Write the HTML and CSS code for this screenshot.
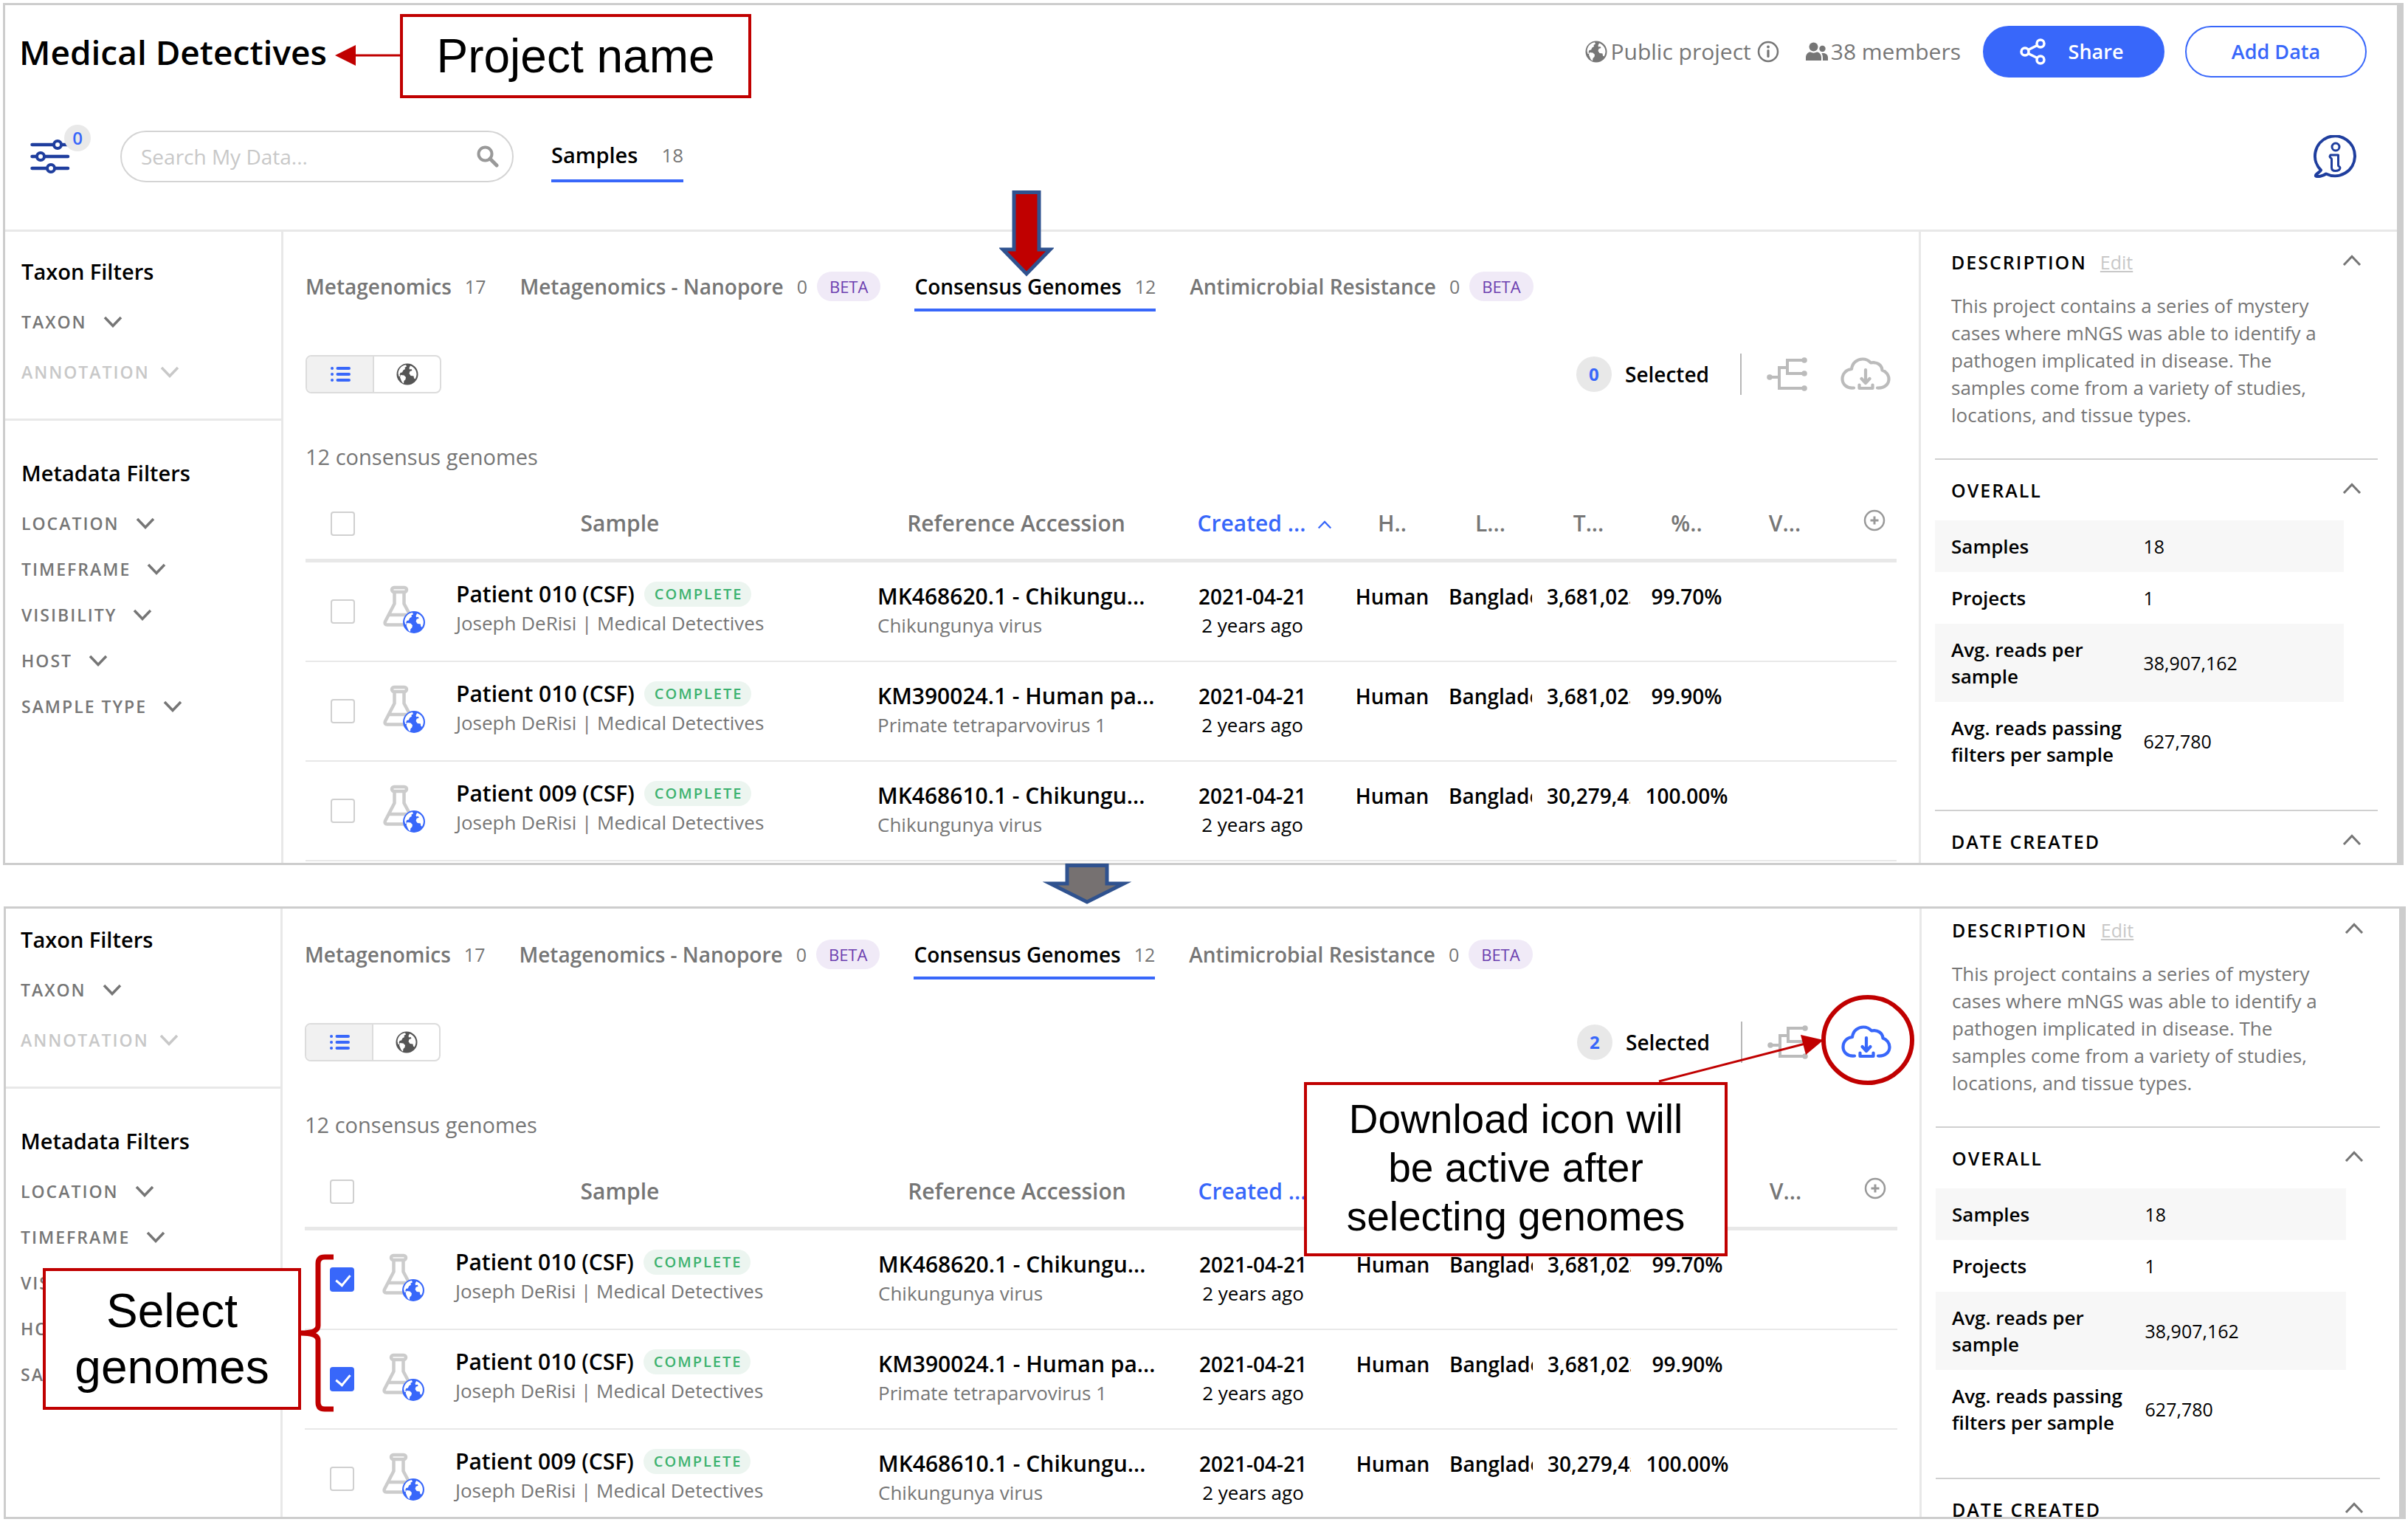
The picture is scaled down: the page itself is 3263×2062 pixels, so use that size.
FILE: index.html
```html
<!DOCTYPE html>
<html lang="en">
<head>
<meta charset="utf-8">
<meta name="viewport" content="width=device-width, initial-scale=1">
<title>Medical Detectives</title>
<link rel="stylesheet" href="styles.css">
</head>
<body>
<svg class="sprite" aria-hidden="true">
  <symbol id="globe" viewBox="0 0 30 30">
    <circle cx="15" cy="15" r="14.5" fill="currentColor"/>
    <path fill="#fff" d="M2.5 14C3 7.500 7.500 3 13 2.300L14 4.500 11.500 6 12 8 9.500 9.500 8 12.500 5.500 13 4.500 16 6 17.500 3.500 18Z"/>
    <path fill="#fff" d="M6 16 10.500 16.500 13 19 12.500 22 10.500 24 10 27.500C7 26 6.500 22 5 19.500Z"/>
    <path fill="#fff" d="M19 3.500C24.500 5.500 27.500 10 27.500 15 27.300 18 26.500 20 25.500 21.500L24 20.500 23.500 17.500 19.500 17 17.500 14 18.500 11 21.500 10 20.500 8 18 8.500 17.500 6.500Z"/>
  </symbol>
  <symbol id="info" viewBox="0 0 30 30">
    <circle cx="15" cy="15" r="13" fill="none" stroke="currentColor" stroke-width="2.500"/>
    <circle cx="15" cy="8.500" r="1.900" fill="currentColor"/>
    <path d="M15 13.500v8" stroke="currentColor" stroke-width="3.200" stroke-linecap="round"/>
  </symbol>
  <symbol id="people" viewBox="0 0 30 26">
    <circle cx="10.500" cy="6.500" r="6" fill="currentColor"/>
    <path fill="currentColor" d="M0 25v-4c0-5 3.500-7.500 6-7.500 3 1.500 6 1.500 9 0 2.500 0 6 2.500 6 7.500v4Z"/>
    <circle cx="22.500" cy="9" r="4.200" fill="currentColor"/>
    <path fill="currentColor" d="M23 25v-4c0-2-.5-4-1.500-6h2c4 0 6.500 2.500 6.500 6v4Z"/>
  </symbol>
  <symbol id="share" viewBox="0 0 36 36">
    <g fill="none" stroke="currentColor" stroke-width="3.500"><circle cx="7" cy="18" r="5"/><circle cx="28" cy="7" r="5"/><circle cx="28" cy="29" r="5"/><path d="M11.500 15.500 23.500 9.500M11.500 20.500 23.500 26.500"/></g>
  </symbol>
  <symbol id="sliders" viewBox="0 0 54 48">
    <g stroke="currentColor" stroke-width="4.500" stroke-linecap="round" fill="#fff"><path d="M2.500 8H51M2.500 24H51M2.500 40H51"/><g stroke-width="4"><circle cx="37" cy="8" r="5"/><circle cx="14" cy="24" r="5"/><circle cx="28" cy="40" r="5"/></g></g>
  </symbol>
  <symbol id="magnifier" viewBox="0 0 30 30">
    <circle cx="11.500" cy="11.500" r="9" fill="none" stroke="currentColor" stroke-width="4"/><path d="M18 18 27 27" stroke="currentColor" stroke-width="5" stroke-linecap="round"/>
  </symbol>
  <symbol id="help" viewBox="0 0 58 58">
    <g fill="none" stroke="currentColor" stroke-width="4" stroke-linejoin="round"><path d="M10 47.500A27 27 0 1 1 17 52.500C12 56 6 56.500 3 55.500 1.500 53 9 50.500 10 47.500Z"/><g stroke-width="3"><circle cx="30" cy="16" r="5"/><path d="M23 27H33.500V41C33.500 43 36 42 36 44.500 35.500 48 32 48.500 29.500 48.500 26 48.500 24.500 47 24.500 44V32.500C24.500 31 22 31 22 29Z"/></g></g>
  </symbol>
  <symbol id="down" viewBox="0 0 26 16"><path d="M2 2 13 13.500 24 2" fill="none" stroke="currentColor" stroke-width="3.500"/></symbol>
  <symbol id="up" viewBox="0 0 26 16"><path d="M2 14 13 2.500 24 14" fill="none" stroke="currentColor" stroke-width="3"/></symbol>
  <symbol id="list" viewBox="0 0 28 24">
    <g stroke="currentColor" stroke-width="4" stroke-linecap="round"><path d="M10.500 4H26M10.500 12H26M10.500 20H26M3 4h.1M3 12h.1M3 20h.1"/></g>
  </symbol>
  <symbol id="tree" viewBox="0 0 56 46">
    <g fill="none" stroke="currentColor" stroke-width="4"><path d="M4 27H17M52 42H17V14H28M52 4H28V22H52"/></g>
    <g fill="currentColor"><circle cx="4" cy="27" r="3.800"/><circle cx="51" cy="4" r="3.800"/><circle cx="51" cy="22" r="3.800"/><circle cx="51" cy="42" r="3.800"/></g>
  </symbol>
  <symbol id="cloud" viewBox="0 0 68 46">
    <g fill="none" stroke="currentColor" stroke-width="4.200" stroke-linecap="round" stroke-linejoin="round"><path d="M18 41.500C8 42.500 2.500 36 2.500 29.500 2.500 22 8 16.500 15 16 16 7 23 2.500 30 2.500 35 2.500 38.500 4.500 41 7.500 49 6 56 10 56.500 17.500 61.500 19 65.500 24 65.500 29.500 65.500 36 60.500 42 50 41.500"/><path d="M34 17V34M28.500 29 34 35 39.500 29M25.500 37.500V42H43.500V37.500"/></g>
  </symbol>
  <symbol id="flask" viewBox="0 0 58 66">
    <g fill="none" stroke="#ccc" stroke-width="4.500" stroke-linejoin="round"><rect x="12" y="3" width="20" height="6" rx="3"/><path d="M15.500 9V25L3 49C2 52 3 53.500 5.500 53.500H39C42 53.500 42.500 51 41 48.500L28.500 25V9M9 40H36"/></g>
    <use href="#globe" x="26.500" y="34.500" width="31" height="31" color="#3867fa"/>
  </symbol>
  <symbol id="plus" viewBox="0 0 30 30"><g fill="none" stroke="currentColor"><circle cx="15" cy="15" r="13" stroke-width="2.500"/><path d="M15 9.500v11M9.500 15h11" stroke-width="3"/></g></symbol>
</svg>

<section class="stage">
  <div class="panel">
    <header class="header">
      <div class="header-row">
        <h1 class="title">Medical Detectives</h1>
        <div class="meta"><svg class="icon-30"><use href="#globe"/></svg><span>Public project</span><svg class="icon-30 meta-info"><use href="#info"/></svg></div>
        <div class="meta meta-members"><svg class="icon-people"><use href="#people"/></svg><span>38 members</span></div>
        <button class="button button-primary"><svg class="icon-share"><use href="#share"/></svg>Share</button>
        <button class="button">Add Data</button>
      </div>
      <div class="header-row header-tools">
        <button class="filters-toggle" aria-label="Filters"><svg class="icon-sliders"><use href="#sliders"/></svg><span class="filters-count">0</span></button>
        <label class="search"><input class="search-input" type="search" aria-label="Search" placeholder="Search My Data..."><svg class="icon-30"><use href="#magnifier"/></svg></label>
        <button class="tab tab-active tab-samples">Samples <span class="count">18</span></button>
        <button class="help" aria-label="Help"><svg class="icon-help"><use href="#help"/></svg></button>
      </div>
    </header>
    <div class="workspace">
      <nav class="filters" aria-label="Filters">
        <div class="filter-group">
          <h2 class="filter-heading">Taxon Filters</h2>
          <button class="filter filter-tall">TAXON<svg class="icon-chevron"><use href="#down"/></svg></button>
          <button class="filter filter-tall filter-off" disabled>ANNOTATION<svg class="icon-chevron"><use href="#down"/></svg></button>
        </div>
        <div class="filter-group filter-group-meta">
          <h2 class="filter-heading">Metadata Filters</h2>
          <button class="filter">LOCATION<svg class="icon-chevron"><use href="#down"/></svg></button>
          <button class="filter">TIMEFRAME<svg class="icon-chevron"><use href="#down"/></svg></button>
          <button class="filter">VISIBILITY<svg class="icon-chevron"><use href="#down"/></svg></button>
          <button class="filter">HOST<svg class="icon-chevron"><use href="#down"/></svg></button>
          <button class="filter">SAMPLE TYPE<svg class="icon-chevron"><use href="#down"/></svg></button>
        </div>
      </nav>
      <main class="main">
        <div class="tabs">
          <button class="tab">Metagenomics <span class="count">17</span></button>
          <button class="tab">Metagenomics - Nanopore <span class="count">0</span><span class="beta">BETA</span></button>
          <button class="tab tab-active">Consensus Genomes <span class="count">12</span>
            <svg class="pointer-red" viewBox="0 0 74 118"><path d="M20 2.500H54V80H69L37 113 5 80H20Z" fill="#c00000" stroke="#2f528f" stroke-width="5"/></svg>
          </button>
          <button class="tab">Antimicrobial Resistance <span class="count">0</span><span class="beta">BETA</span></button>
        </div>
        <div class="toolbar">
          <div class="view-toggle"><button class="view view-on" aria-label="List view"><svg class="icon-list"><use href="#list"/></svg></button><button class="view" aria-label="Map view"><svg class="icon-30"><use href="#globe"/></svg></button></div>
          <div class="selection"><span class="selected-count">0</span><span>Selected</span></div>
          <div class="actions"><button aria-label="Phylogenetic tree"><svg class="icon-tree"><use href="#tree"/></svg></button><button aria-label="Download"><svg class="icon-cloud"><use href="#cloud"/></svg></button></div>
        </div>
        <p class="summary">12 consensus genomes</p>
        <table class="samples">
          <colgroup><col class="col-check"><col><col class="col-ref"><col class="col-created"><col class="col-narrow"><col class="col-narrow"><col class="col-narrow"><col class="col-narrow"><col class="col-narrow"><col class="col-add"></colgroup>
          <thead><tr><th class="check"><input type="checkbox" aria-label="Select all"></th><th>Sample</th><th>Reference Accession</th><th class="sorted">Created ...<svg class="icon-sort"><use href="#up"/></svg></th><th>H..</th><th>L...</th><th>T...</th><th>%..</th><th>V...</th><th class="add"><button aria-label="Add column"><svg class="icon-30"><use href="#plus"/></svg></button></th></tr></thead>
          <tbody>
            <tr><td class="check"><input type="checkbox" aria-label="Select Patient 010 (CSF)"></td><td class="sample"><div class="sample-box"><svg class="icon-flask"><use href="#flask"/></svg><div><div class="name">Patient 010 (CSF)<span class="status">COMPLETE</span></div><div class="sub">Joseph DeRisi | Medical Detectives</div></div></div></td><td class="ref"><div class="name">MK468620.1 - Chikungu...</div><div class="sub">Chikungunya virus</div></td><td>2021-04-21<div class="ago">2 years ago</div></td><td>Human</td><td><div class="clip">Bangladesh</div></td><td><div class="clip">3,681,023</div></td><td class="pct">99.70%</td><td></td><td></td></tr>
            <tr><td class="check"><input type="checkbox" aria-label="Select Patient 010 (CSF)"></td><td class="sample"><div class="sample-box"><svg class="icon-flask"><use href="#flask"/></svg><div><div class="name">Patient 010 (CSF)<span class="status">COMPLETE</span></div><div class="sub">Joseph DeRisi | Medical Detectives</div></div></div></td><td class="ref"><div class="name">KM390024.1 - Human pa...</div><div class="sub">Primate tetraparvovirus 1</div></td><td>2021-04-21<div class="ago">2 years ago</div></td><td>Human</td><td><div class="clip">Bangladesh</div></td><td><div class="clip">3,681,023</div></td><td class="pct">99.90%</td><td></td><td></td></tr>
            <tr><td class="check"><input type="checkbox" aria-label="Select Patient 009 (CSF)"></td><td class="sample"><div class="sample-box"><svg class="icon-flask"><use href="#flask"/></svg><div><div class="name">Patient 009 (CSF)<span class="status">COMPLETE</span></div><div class="sub">Joseph DeRisi | Medical Detectives</div></div></div></td><td class="ref"><div class="name">MK468610.1 - Chikungu...</div><div class="sub">Chikungunya virus</div></td><td>2021-04-21<div class="ago">2 years ago</div></td><td>Human</td><td><div class="clip">Bangladesh</div></td><td><div class="clip">30,279,424</div></td><td class="pct">100.00%</td><td></td><td></td></tr>
          </tbody>
        </table>
      </main>
      <aside class="details">
        <section class="detail">
          <div class="detail-head"><h3>DESCRIPTION</h3><a class="edit" href="#edit">Edit</a><svg class="icon-chevron"><use href="#up"/></svg></div>
          <p class="description">This project contains a series of mystery cases where mNGS was able to identify a pathogen implicated in disease. The samples come from a variety of studies, locations, and tissue types.</p>
        </section>
        <section class="detail">
          <div class="detail-head"><h3>OVERALL</h3><svg class="icon-chevron"><use href="#up"/></svg></div>
          <table class="stats">
            <tr><th scope="row">Samples</th><td>18</td></tr>
            <tr><th scope="row">Projects</th><td>1</td></tr>
            <tr><th scope="row">Avg. reads per sample</th><td>38,907,162</td></tr>
            <tr><th scope="row">Avg. reads passing filters per sample</th><td>627,780</td></tr>
          </table>
        </section>
        <section class="detail">
          <div class="detail-head"><h3>DATE CREATED</h3><svg class="icon-chevron"><use href="#up"/></svg></div>
        </section>
      </aside>
    </div>
  </div>
  <div class="callout callout-project">Project name</div>
  <svg class="arrow-project" viewBox="0 0 90 28"><path d="M26 14H90" stroke="#c00000" stroke-width="3"/><path d="M0 14 28 0V28Z" fill="#c00000"/></svg>
</section>

<div class="step"><svg class="step-arrow" viewBox="0 0 120 56"><path d="M33 2.500H87V27H110L60 52 10 27H33Z" fill="#767171" stroke="#2f528f" stroke-width="5" stroke-miterlimit="10"/></svg></div>

<section class="stage stage-second">
  <div class="panel panel-cropped">
    <div class="workspace">
      <nav class="filters" aria-label="Filters">
        <div class="filter-group">
          <h2 class="filter-heading">Taxon Filters</h2>
          <button class="filter filter-tall">TAXON<svg class="icon-chevron"><use href="#down"/></svg></button>
          <button class="filter filter-tall filter-off" disabled>ANNOTATION<svg class="icon-chevron"><use href="#down"/></svg></button>
        </div>
        <div class="filter-group filter-group-meta">
          <h2 class="filter-heading">Metadata Filters</h2>
          <button class="filter">LOCATION<svg class="icon-chevron"><use href="#down"/></svg></button>
          <button class="filter">TIMEFRAME<svg class="icon-chevron"><use href="#down"/></svg></button>
          <button class="filter">VISIBILITY<svg class="icon-chevron"><use href="#down"/></svg></button>
          <button class="filter">HOST<svg class="icon-chevron"><use href="#down"/></svg></button>
          <button class="filter">SAMPLE TYPE<svg class="icon-chevron"><use href="#down"/></svg></button>
        </div>
      </nav>
      <main class="main">
        <div class="tabs">
          <button class="tab">Metagenomics <span class="count">17</span></button>
          <button class="tab">Metagenomics - Nanopore <span class="count">0</span><span class="beta">BETA</span></button>
          <button class="tab tab-active">Consensus Genomes <span class="count">12</span></button>
          <button class="tab">Antimicrobial Resistance <span class="count">0</span><span class="beta">BETA</span></button>
        </div>
        <div class="toolbar">
          <div class="view-toggle"><button class="view view-on" aria-label="List view"><svg class="icon-list"><use href="#list"/></svg></button><button class="view" aria-label="Map view"><svg class="icon-30"><use href="#globe"/></svg></button></div>
          <div class="selection"><span class="selected-count">2</span><span>Selected</span></div>
          <div class="actions"><button aria-label="Phylogenetic tree"><svg class="icon-tree"><use href="#tree"/></svg></button><button class="action-on" aria-label="Download"><svg class="icon-cloud"><use href="#cloud"/></svg></button></div>
        </div>
        <p class="summary">12 consensus genomes</p>
        <table class="samples">
          <colgroup><col class="col-check"><col><col class="col-ref"><col class="col-created"><col class="col-narrow"><col class="col-narrow"><col class="col-narrow"><col class="col-narrow"><col class="col-narrow"><col class="col-add"></colgroup>
          <thead><tr><th class="check"><input type="checkbox" aria-label="Select all"></th><th>Sample</th><th>Reference Accession</th><th class="sorted">Created ...<svg class="icon-sort"><use href="#up"/></svg></th><th>H..</th><th>L...</th><th>T...</th><th>%..</th><th>V...</th><th class="add"><button aria-label="Add column"><svg class="icon-30"><use href="#plus"/></svg></button></th></tr></thead>
          <tbody>
            <tr><td class="check"><input type="checkbox" checked aria-label="Select Patient 010 (CSF)"></td><td class="sample"><div class="sample-box"><svg class="icon-flask"><use href="#flask"/></svg><div><div class="name">Patient 010 (CSF)<span class="status">COMPLETE</span></div><div class="sub">Joseph DeRisi | Medical Detectives</div></div></div></td><td class="ref"><div class="name">MK468620.1 - Chikungu...</div><div class="sub">Chikungunya virus</div></td><td>2021-04-21<div class="ago">2 years ago</div></td><td>Human</td><td><div class="clip">Bangladesh</div></td><td><div class="clip">3,681,023</div></td><td class="pct">99.70%</td><td></td><td></td></tr>
            <tr><td class="check"><input type="checkbox" checked aria-label="Select Patient 010 (CSF)"></td><td class="sample"><div class="sample-box"><svg class="icon-flask"><use href="#flask"/></svg><div><div class="name">Patient 010 (CSF)<span class="status">COMPLETE</span></div><div class="sub">Joseph DeRisi | Medical Detectives</div></div></div></td><td class="ref"><div class="name">KM390024.1 - Human pa...</div><div class="sub">Primate tetraparvovirus 1</div></td><td>2021-04-21<div class="ago">2 years ago</div></td><td>Human</td><td><div class="clip">Bangladesh</div></td><td><div class="clip">3,681,023</div></td><td class="pct">99.90%</td><td></td><td></td></tr>
            <tr><td class="check"><input type="checkbox" aria-label="Select Patient 009 (CSF)"></td><td class="sample"><div class="sample-box"><svg class="icon-flask"><use href="#flask"/></svg><div><div class="name">Patient 009 (CSF)<span class="status">COMPLETE</span></div><div class="sub">Joseph DeRisi | Medical Detectives</div></div></div></td><td class="ref"><div class="name">MK468610.1 - Chikungu...</div><div class="sub">Chikungunya virus</div></td><td>2021-04-21<div class="ago">2 years ago</div></td><td>Human</td><td><div class="clip">Bangladesh</div></td><td><div class="clip">30,279,424</div></td><td class="pct">100.00%</td><td></td><td></td></tr>
          </tbody>
        </table>
      </main>
      <aside class="details">
        <section class="detail">
          <div class="detail-head"><h3>DESCRIPTION</h3><a class="edit" href="#edit">Edit</a><svg class="icon-chevron"><use href="#up"/></svg></div>
          <p class="description">This project contains a series of mystery cases where mNGS was able to identify a pathogen implicated in disease. The samples come from a variety of studies, locations, and tissue types.</p>
        </section>
        <section class="detail">
          <div class="detail-head"><h3>OVERALL</h3><svg class="icon-chevron"><use href="#up"/></svg></div>
          <table class="stats">
            <tr><th scope="row">Samples</th><td>18</td></tr>
            <tr><th scope="row">Projects</th><td>1</td></tr>
            <tr><th scope="row">Avg. reads per sample</th><td>38,907,162</td></tr>
            <tr><th scope="row">Avg. reads passing filters per sample</th><td>627,780</td></tr>
          </table>
        </section>
        <section class="detail">
          <div class="detail-head"><h3>DATE CREATED</h3><svg class="icon-chevron"><use href="#up"/></svg></div>
        </section>
      </aside>
    </div>
  </div>
  <div class="callout callout-select">Select<br>genomes</div>
  <svg class="brace" viewBox="0 0 48 216"><path d="M46 5H34Q25 5 25 14V98Q25 108 2 108 25 108 25 118V202Q25 211 34 211H46" fill="none" stroke="#c00000" stroke-width="7"/></svg>
  <svg class="arrow-download" viewBox="0 0 360 136"><path d="M8 125 206 74" stroke="#c00000" stroke-width="3"/><path d="M231 69 200 62 207 89Z" fill="#c00000"/><ellipse cx="291" cy="69" rx="60" ry="58" fill="none" stroke="#c00000" stroke-width="6"/></svg>
  <div class="callout callout-download">Download icon will be active after selecting genomes</div>
</section>
</body>
</html>
```
FILE: styles.css
```css
:root {
  --line: #e8e8e8;
  --frame: #cdcdcd;
  --gray: #767676;
  --light: #c8c8c8;
  --blue: #3867fa;
  --navy: #1f3e9e;
  --red: #c00000;
}

* { box-sizing: border-box; }

body {
  margin: 0;
  height: 100vh;
  padding: 4px 0;
  display: flex;
  flex-direction: column;
  background: #fff;
  color: #000;
  font: 600 28px/40px "Open Sans", "Noto Sans", sans-serif;
}

button {
  padding: 0;
  border: 0;
  background: none;
  color: inherit;
  font: inherit;
  text-align: left;
}

h1, h2, h3, p { margin: 0; font: inherit; }
svg { display: block; flex: none; }
table { border-collapse: separate; border-spacing: 0; table-layout: fixed; }
th, td { padding: 0; font-weight: 600; }

.sprite { position: absolute; width: 0; height: 0; }
.icon-30 { width: 30px; height: 30px; }
.icon-people { width: 30px; height: 26px; }
.icon-share { width: 36px; height: 38px; }
.icon-sliders { width: 54px; height: 48px; }
.icon-help { width: 58px; height: 58px; }
.icon-chevron { width: 26px; height: 16px; }
.icon-sort { width: 20px; height: 12px; }
.icon-list { width: 28px; height: 24px; }
.icon-tree { width: 56px; height: 46px; }
.icon-cloud { width: 68px; height: 46px; }
.icon-flask { width: 58px; height: 66px; }

/* Framed application windows */
.stage { position: relative; flex: none; }
.stage-second { flex: 1 1 0; min-height: 0; }

.panel {
  margin: 0 6px 0 4px;
  border: 3px solid var(--frame);
  border-right-width: 9px;
  overflow: hidden;
}

.panel-cropped { height: 100%; margin: 0 3px 0 5px; }

.header {
  padding: 28px 41px 64px 19px;
  border-bottom: 3px solid var(--line);
}

.header-row { display: flex; align-items: center; }
.header-tools { margin-top: 72px; }
.title { margin-right: auto; font-size: 46px; line-height: 64px; }

.meta {
  display: flex;
  align-items: center;
  gap: 4px;
  margin-right: 36px;
  color: var(--gray);
  font-size: 30px;
  font-weight: 400;
}

.meta-info { margin-left: 4px; }
.meta-members { margin-right: 30px; }

.button {
  display: flex;
  align-items: center;
  justify-content: center;
  gap: 30px;
  width: 246px;
  height: 70px;
  border: 2px solid var(--blue);
  border-radius: 35px;
  color: var(--blue);
  font-size: 27px;
}

.button-primary { margin-right: 28px; padding-right: 6px; background: var(--blue); color: #fff; }

.filters-toggle { position: relative; margin-left: 15px; color: var(--navy); }

.filters-count {
  position: absolute;
  top: -19px;
  left: 46px;
  width: 36px;
  height: 36px;
  border-radius: 50%;
  background: #e9e9e9;
  color: var(--blue);
  font-size: 24px;
  line-height: 36px;
  text-align: center;
}

.search {
  display: flex;
  align-items: center;
  width: 533px;
  height: 70px;
  margin: 0 51px 0 68px;
  padding: 0 18px 0 26px;
  border: 2px solid #d4d4d4;
  border-radius: 35px;
  color: #999;
}

.search-input {
  flex: 1;
  min-width: 0;
  padding: 0;
  border: 0;
  outline: 0;
  background: none;
  font: 400 28px/40px "Open Sans", "Noto Sans", sans-serif;
}

.search-input::placeholder { color: var(--light); opacity: 1; }
.help { margin: 0 14px 0 auto; color: var(--navy); }

.workspace { display: grid; grid-template-columns: 377px minmax(0, 1fr) 648px; }
.panel-cropped .workspace { grid-template-columns: 375px minmax(0, 1fr) 650px; height: calc(100% + 12px); margin-top: -12px; }

/* Filter column */
.filters { border-right: 3px solid var(--line); }
.filter-group { display: flex; flex-direction: column; padding: 34px 0 29px 22px; }
.panel-cropped .filter-group { padding-left: 20px; }
.filter-group-meta { padding-top: 51px; border-top: 3px solid var(--line); }
.filter-heading { margin-bottom: 14px; font-size: 29px; }
.filter-group-meta .filter-heading { margin-bottom: 17px; }

.filter {
  display: flex;
  align-items: center;
  gap: 22px;
  height: 62px;
  color: var(--gray);
  font-size: 23px;
  letter-spacing: 2px;
}

.filter-tall { height: 68px; }
.filter-off { gap: 14px; color: var(--light); }

/* Sample list */
.main { padding: 54px 30px 2px; }
.tabs { display: flex; gap: 46px; }

.tab {
  position: relative;
  display: flex;
  align-items: center;
  height: 54px;
  padding-bottom: 10px;
  border-bottom: 4px solid transparent;
  color: var(--gray);
  font-size: 28px;
  white-space: nowrap;
}

.tab-active { border-color: var(--blue); color: #000; }
.tab-samples { height: 70px; padding-bottom: 0; font-size: 29px; }
.count { margin-left: 18px; color: var(--gray); font-size: 25px; font-weight: 400; }
.tab-samples .count { margin-left: 32px; font-size: 26px; }

.beta {
  margin-left: 13px;
  padding: 0 17px;
  border-radius: 20px;
  background: #f0eaf7;
  color: #6c3fb0;
  font-size: 22px;
  font-weight: 400;
}

.toolbar { display: flex; align-items: center; height: 52px; margin-top: 59px; }

.view-toggle {
  display: flex;
  width: 184px;
  height: 52px;
  border: 2px solid #dcdcdc;
  border-radius: 8px;
  overflow: hidden;
}

.view { display: flex; flex: 1; align-items: center; justify-content: center; color: #555; }
.view-on { border-right: 2px solid #dcdcdc; background: #f1f1f1; color: var(--blue); }

.selection {
  display: flex;
  align-items: center;
  gap: 18px;
  height: 56px;
  margin-left: auto;
  padding-right: 42px;
  border-right: 2px solid #b8b8b8;
}

.selected-count {
  width: 48px;
  height: 48px;
  border-radius: 50%;
  background: #e8e8e8;
  color: var(--blue);
  font-size: 24px;
  font-weight: 700;
  line-height: 48px;
  text-align: center;
}

.actions { display: flex; gap: 44px; padding: 0 8px 0 34px; color: #bbb; }
.action-on { color: var(--blue); }
.summary { margin: 66px 0 22px; color: var(--gray); font-size: 29px; font-weight: 400; }

.samples { width: 100%; font-size: 28px; text-align: center; }
.col-check { width: 86px; }
.col-ref { width: 394px; }
.col-created { width: 246px; }
.col-narrow { width: 133px; }
.col-add { width: 85px; }

.samples thead th {
  height: 101px;
  border-bottom: 5px solid var(--line);
  color: var(--gray);
  font-size: 30px;
}

.samples .check { padding: 0 0 0 34px; text-align: left; vertical-align: middle; }

.samples input {
  appearance: none;
  display: block;
  position: relative;
  width: 33px;
  height: 33px;
  margin: 0;
  border: 2px solid #d0d0d0;
  border-radius: 4px;
  background: #fff;
}

.samples input:checked { border-color: var(--blue); background: var(--blue); }

.samples input:checked::after {
  content: "";
  position: absolute;
  top: 4px;
  left: 10px;
  width: 9px;
  height: 16px;
  border: solid #fff;
  border-width: 0 3px 3px 0;
  transform: rotate(40deg);
}

.samples thead .sorted { color: var(--blue); }
.icon-sort { display: inline-block; margin: 0 -34px 2px 16px; vertical-align: middle; }
.samples .add { padding-left: 24px; color: #999; }

.samples td {
  height: 135px;
  padding: 26px 10px 0;
  border-bottom: 2px solid var(--line);
  vertical-align: top;
  white-space: nowrap;
}

.samples .sample { padding: 23px 0 0 19px; text-align: left; }
.samples .ref { padding-left: 9px; text-align: left; }
.samples .pct { padding-right: 0; padding-left: 0; }
.sample-box { display: flex; align-items: flex-start; gap: 41px; }
.sample-box .icon-flask { margin-top: 8px; }
.name { display: flex; align-items: center; font-size: 30px; }
.sub { color: var(--gray); font-size: 26px; font-weight: 400; line-height: 38px; }
.ago { font-size: 26px; font-weight: 400; line-height: 38px; }
.clip { overflow: hidden; }

.status {
  margin-left: 13px;
  padding: 0 12px 0 14px;
  border-radius: 17px;
  background: #ecf5f0;
  color: #3cb26f;
  font-size: 20px;
  line-height: 34px;
  letter-spacing: 2px;
}

/* Project details */
.details {
  contain: size;
  overflow: hidden;
  padding: 0 26px 0 19px;
  border-left: 3px solid var(--line);
}

.detail + .detail { margin-top: 40px; border-top: 2px solid #d0d0d0; }
.detail-head { display: flex; align-items: center; height: 82px; padding: 0 22px; font-size: 25px; letter-spacing: 2px; }
.detail-head .icon-chevron { margin: 0 0 4px auto; color: var(--gray); }
.edit { margin-left: 18px; color: var(--light); font-size: 25px; font-weight: 400; letter-spacing: 0; }
.description { padding: 0 62px 0 22px; color: var(--gray); font-size: 26px; font-weight: 400; line-height: 37px; }

.stats { width: calc(100% - 46px); font-size: 26px; line-height: 36px; text-align: left; }
.stats tr:nth-child(odd) { background: #f7f7f7; }
.stats th { width: 51%; padding: 17px 0 17px 22px; }
.stats td { font-size: 25px; font-weight: 400; }

/* Annotations laid over the windows */
.callout {
  position: absolute;
  display: flex;
  align-items: center;
  justify-content: center;
  border: 4px solid var(--red);
  background: #fff;
  font: 400 64px/76px "Liberation Sans", Arial, sans-serif;
  text-align: center;
}

.callout-project { top: 15px; left: 542px; width: 476px; height: 114px; }
.arrow-project { position: absolute; top: 57px; left: 454px; width: 90px; height: 28px; }
.pointer-red { position: absolute; top: -110px; left: 115px; width: 74px; height: 118px; }
.callout-select { top: 490px; left: 58px; width: 350px; height: 192px; }
.brace { position: absolute; top: 470px; left: 406px; width: 48px; height: 216px; }
.callout-download { top: 238px; right: 922px; width: 574px; height: 236px; padding: 0 30px 4px; font-size: 55px; line-height: 66px; }
.arrow-download { position: absolute; top: 112px; right: 663px; width: 360px; height: 136px; }

.step { position: relative; z-index: 1; display: flex; flex: none; height: 56px; padding-left: 1413px; }
.step-arrow { width: 120px; height: 56px; margin-top: -2px; }
```
